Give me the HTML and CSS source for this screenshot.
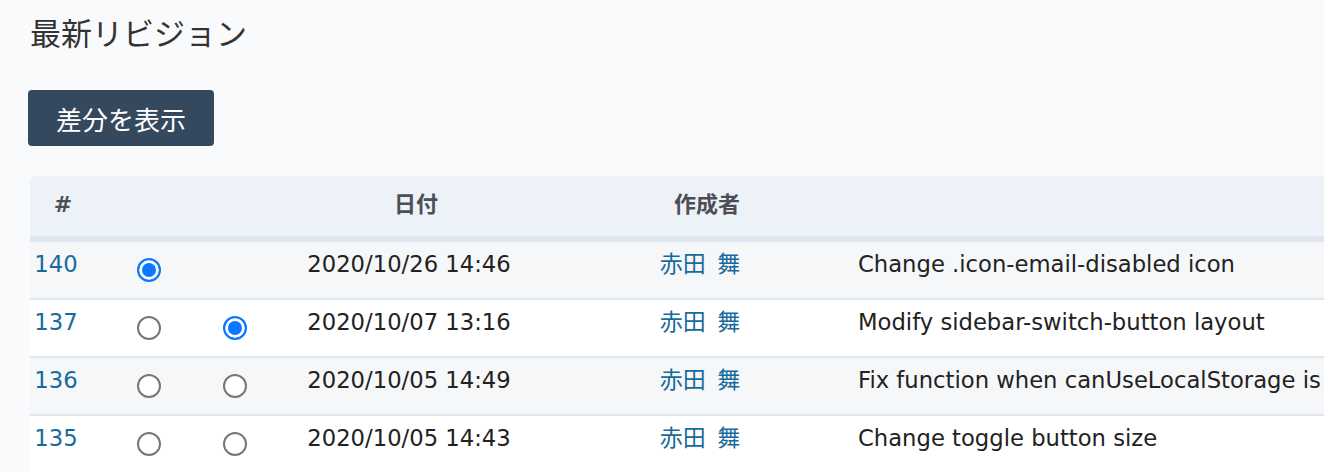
FILE: index.html
```html
<!DOCTYPE html>
<html lang="ja">
<head>
<meta charset="utf-8">
<title>最新リビジョン</title>
<link rel="stylesheet" href="styles.css">
</head>
<body>
<main class="page">
  <h2 class="title">最新リビジョン</h2>
  <button class="btn">差分を表示</button>
  <div class="revs">
    <div class="row head">
      <div class="th">#</div>
      <div class="th"></div>
      <div class="th"></div>
      <div class="th">日付</div>
      <div class="th">作成者</div>
      <div class="th"></div>
    </div>
    <div class="row odd">
      <div class="td num"><a href="#">140</a></div>
      <div class="td radio-cell"><span class="radio checked"></span></div>
      <div class="td radio-cell"></div>
      <div class="td">2020/10/26 14:46</div>
      <div class="td author"><a href="#">赤田 舞</a></div>
      <div class="td msg">Change .icon-email-disabled icon</div>
    </div>
    <div class="row">
      <div class="td num"><a href="#">137</a></div>
      <div class="td radio-cell"><span class="radio"></span></div>
      <div class="td radio-cell"><span class="radio checked"></span></div>
      <div class="td">2020/10/07 13:16</div>
      <div class="td author"><a href="#">赤田 舞</a></div>
      <div class="td msg">Modify sidebar-switch-button layout</div>
    </div>
    <div class="row odd">
      <div class="td num"><a href="#">136</a></div>
      <div class="td radio-cell"><span class="radio"></span></div>
      <div class="td radio-cell"><span class="radio"></span></div>
      <div class="td">2020/10/05 14:49</div>
      <div class="td author"><a href="#">赤田 舞</a></div>
      <div class="td msg">Fix function when canUseLocalStorage is</div>
    </div>
    <div class="row">
      <div class="td num"><a href="#">135</a></div>
      <div class="td radio-cell"><span class="radio"></span></div>
      <div class="td radio-cell"><span class="radio"></span></div>
      <div class="td">2020/10/05 14:43</div>
      <div class="td author"><a href="#">赤田 舞</a></div>
      <div class="td msg">Change toggle button size</div>
    </div>
  </div>
</main>
</body>
</html>
```

FILE: styles.css
```css
html, body {
  margin: 0;
  padding: 0;
  overflow: hidden;
  background: #f9fafc;
}
body {
  font-family: "DejaVu Sans", "Noto Sans CJK JP", sans-serif;
  color: #222;
}
.page {
  padding: 14px 0 0 30px;
}
.title {
  margin: 0;
  font-family: "Noto Sans CJK JP", sans-serif;
  font-size: 31px;
  font-weight: normal;
  line-height: 36px;
  color: #333;
}
.btn {
  display: block;
  margin: 40px 0 0 -2px;
  height: 56px;
  padding: 0 28px;
  border: none;
  border-radius: 4px;
  background: #34495e;
  color: #fff;
  font-family: "Noto Sans CJK JP", sans-serif;
  font-size: 26px;
}
.revs {
  margin-top: 30px;
  width: 1500px;
}
.row {
  display: grid;
  grid-template-columns: 66px 120px 52px 296px 286px 1fr;
  height: 58px;
  box-sizing: border-box;
  border-bottom: 2px solid #e0e7ef;
  background: #fff;
}
.row.odd {
  background: #f5f7f9;
}
.row.head {
  height: 66px;
  border-bottom: 6px solid #dfe6ef;
  background: #edf1f8;
  border-top-left-radius: 6px;
}
.th {
  font-size: 22px;
  font-weight: bold;
  color: #4b4f55;
  text-align: center;
  line-height: 58px;
}
.td {
  font-size: 22.7px;
  line-height: 32px;
  padding: 6px 14px 0 0;
  text-align: center;
}
.td.author {
  font-size: 23px;
  word-spacing: 4px;
}
.td.msg {
  text-align: left;
  padding-left: 8px;
  white-space: nowrap;
}
.td a {
  color: #176a9c;
  text-decoration: none;
}
.radio-cell {
  padding-top: 16px;
}
.radio {
  display: inline-block;
  width: 20px;
  height: 20px;
  border: 2px solid #777;
  border-radius: 50%;
  background: #fff;
}
.radio.checked {
  border-color: #0a78ff;
  background: #0a78ff;
  box-shadow: inset 0 0 0 3px #fff;
}
```
